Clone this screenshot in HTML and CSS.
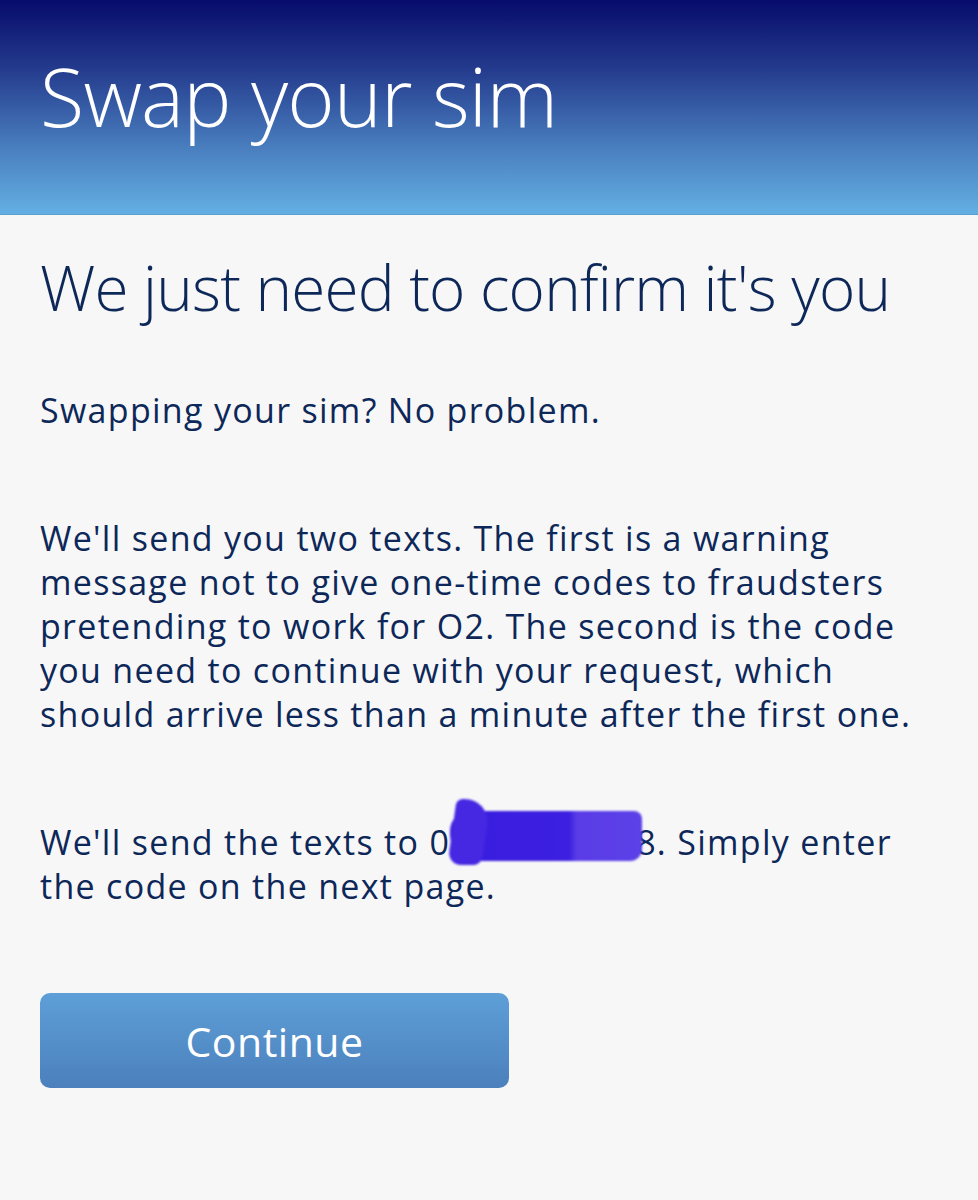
FILE: index.html
```html
<!DOCTYPE html>
<html lang="en">
<head>
    <meta charset="UTF-8">
    <meta name="viewport" content="width=device-width, initial-scale=1.0">
    <title>Swap your sim</title>
    <link rel="stylesheet" href="styles.css">
</head>
<body>
    <!-- Cabecera con degradado -->
    <header class="page-header">
        <h1>Swap your sim</h1>
    </header>

    <main class="content">
        <h2>We just need to confirm it's you</h2>

        <p>Swapping your sim? No problem.</p>

        <p>We'll send you two texts. The first is a warning message not to give one-time codes to fraudsters pretending to work for O2. The second is the code you need to continue with your request, which should arrive less than a minute after the first one.</p>

        <p>We'll send the texts to 0<span class="redacted"></span>8. Simply enter the code on the next page.</p>

        <button class="btn-continue">Continue</button>
    </main>
</body>
</html>
```

FILE: styles.css
```css
body {
    margin: 0;
    background-color: #f7f7f8;
    font-family: "Open Sans", "DejaVu Sans", sans-serif;
    color: #0d2858;
}

.page-header {
    height: 215px;
    background: linear-gradient(to bottom, #070c6c 0%, #22378a 30%, #4a80c0 70%, #63afe2 100%);
    padding: 0 40px;
    box-sizing: border-box;
    border-bottom: 1px solid #5b9fd0;
}

.page-header h1 {
    margin: 0;
    padding-top: 47px;
    font-weight: 300;
    font-size: 81px;
    line-height: 1.2;
    color: #ffffff;
    letter-spacing: -0.8px;
}

.content {
    padding: 0 40px;
    max-width: 880px;
}

.content h2 {
    margin: 32px 0 0;
    font-weight: 300;
    font-size: 62px;
    line-height: 80px;
    letter-spacing: -0.8px;
}

.content p {
    margin: 84px 0 0;
    font-size: 34px;
    font-weight: 500;
    line-height: 44px;
    letter-spacing: 1.3px;
}

.content h2 + p {
    margin-top: 61px;
}

/* Número oculto con un trazo morado */
.redacted {
    position: relative;
    display: inline-block;
    width: 192px;
    height: 50px;
    margin: -12px -6px -6px 0;
    vertical-align: baseline;
    background: linear-gradient(to right, #3a1ee0 0%, #3c1fe0 62%, #5a3de6 66%, #5c40e8 100%);
    border-radius: 20px 8px 12px 26px;
    filter: blur(1px);
}

/* trazo extra a la izquierda */
.redacted::before {
    content: "";
    position: absolute;
    left: 2px;
    top: -12px;
    width: 34px;
    height: 66px;
    background: #4628e2;
    border-radius: 6px 26px 8px 14px;
    transform: skewX(-8deg);
}

.btn-continue {
    display: block;
    margin-top: 85px;
    width: 469px;
    height: 95px;
    border: none;
    border-radius: 10px;
    background: linear-gradient(to bottom, #5e9fd8 0%, #4b80bc 100%);
    color: #ffffff;
    font-family: inherit;
    font-size: 41px;
    letter-spacing: 0.5px;
    cursor: pointer;
}
```
